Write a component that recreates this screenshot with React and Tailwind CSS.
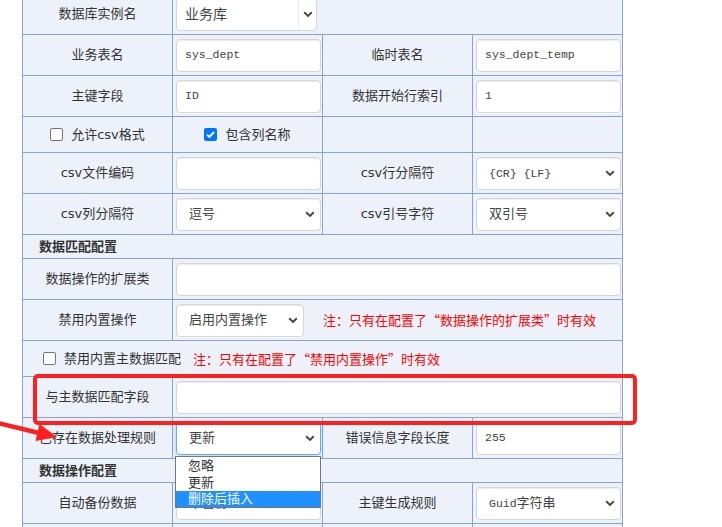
import React from "react";

const LBL = "font-['DejaVu_Sans','Noto_Sans_CJK_SC',sans-serif]";
const CJK = "font-['Noto_Sans_CJK_SC',sans-serif]";
const MONO = "font-['Liberation_Mono','Noto_Sans_CJK_SC',monospace]";

function Chevron() {
  return (
    <svg width="10" height="7" viewBox="0 0 10 7" className="shrink-0">
      <path d="M1.2 1.3 L5 5 L8.8 1.3" fill="none" stroke="#444" strokeWidth="1.9" />
    </svg>
  );
}

function Label({ children, className = "" }) {
  return (
    <div className={`bg-[#edf2fa] flex items-center justify-center text-[13px] text-[#333] ${LBL} ${className}`}>
      {children}
    </div>
  );
}

function InputBox({ children, mono = true }) {
  return (
    <div className={`h-[33px] w-full rounded-[4px] border border-[#d6d6d6] bg-white shadow-[inset_0_1px_1px_rgba(0,0,0,0.08)] flex items-center pl-[8px] text-[#444] ${mono ? `text-[11.5px] ${MONO}` : `text-[13px] ${LBL}`}`}>
      {children}
    </div>
  );
}

function SelectBox({ children, className = "w-full", focus = false, extra = null }) {
  return (
    <div className={`relative ${className}`}>
      <div
        className={`h-[33px] w-full rounded-[4px] border bg-white flex items-center pl-[12px] pr-[5px] text-[13px] text-[#444] ${LBL} ${
          focus
            ? "border-[#66afe9] shadow-[0_0_4px_rgba(102,175,233,0.6)]"
            : "border-[#d6d6d6] shadow-[inset_0_1px_1px_rgba(0,0,0,0.08)]"
        }`}
      >
        <div className="flex-1 whitespace-nowrap overflow-hidden">{children}</div>
        <Chevron />
      </div>
      {extra}
    </div>
  );
}

function InCell({ children, className = "" }) {
  return <div className={`bg-[#edf2fa] flex items-center pl-[3px] pr-[1px] h-[40px] ${className}`}>{children}</div>;
}

function CheckBox({ checked }) {
  if (checked) {
    return (
      <div className="w-[13px] h-[13px] rounded-[2px] bg-[#0075ff] flex items-center justify-center shrink-0">
        <svg width="11" height="11" viewBox="0 0 11 11">
          <path d="M2 5.6 L4.4 8 L9 3" fill="none" stroke="#fff" strokeWidth="1.9" />
        </svg>
      </div>
    );
  }
  return <div className="w-[13px] h-[13px] rounded-[2px] border border-[#767676] bg-white shrink-0" />;
}

function Section({ children }) {
  return (
    <div className={`col-span-4 bg-[#edf2fa] h-[23px] flex items-center pl-[16px] text-[13px] font-bold text-[#333] ${LBL}`}>
      {children}
    </div>
  );
}

export default function App() {
  return (
    <div className="relative w-[722px] h-[527px] overflow-hidden bg-white">
      <div className="ml-[22px] mt-[-7px] w-[601px] grid grid-cols-[149px_149px_149px_149px] gap-[1px] bg-[#84a4dc] p-[1px]">
        {/* row 0 */}
        <Label className="h-[40px]">数据库实例名</Label>
        <InCell className="col-span-3">
          <div className={`relative h-[33px] w-[141px] rounded-[4px] border border-[#d6d6d6] bg-white flex items-center text-[14px] text-[#444] ${LBL}`}>
            <div className="flex-1 pl-[8px]">业务库</div>
            <div className="w-[18px] h-full border-l border-[#ececec] flex items-center justify-center">
              <Chevron />
            </div>
          </div>
        </InCell>

        {/* row 1 */}
        <Label className="h-[40px]">业务表名</Label>
        <InCell><InputBox>sys_dept</InputBox></InCell>
        <Label>临时表名</Label>
        <InCell><InputBox>sys_dept_temp</InputBox></InCell>

        {/* row 2 */}
        <Label className="h-[40px]">主键字段</Label>
        <InCell><InputBox>ID</InputBox></InCell>
        <Label>数据开始行索引</Label>
        <InCell><InputBox>1</InputBox></InCell>

        {/* row 3 */}
        <Label className="h-[35px] gap-[8px]">
          <CheckBox checked={false} />
          <span>允许csv格式</span>
        </Label>
        <Label className="gap-[8px]">
          <CheckBox checked={true} />
          <span>包含列名称</span>
        </Label>
        <div className="bg-[#edf2fa]" />
        <div className="bg-[#edf2fa]" />

        {/* row 4 */}
        <Label className="h-[40px]">csv文件编码</Label>
        <InCell><InputBox></InputBox></InCell>
        <Label>csv行分隔符</Label>
        <InCell><SelectBox><span className={`text-[11.5px] ${MONO}`}>{"{CR} {LF}"}</span></SelectBox></InCell>

        {/* row 5 */}
        <Label className="h-[40px]">csv列分隔符</Label>
        <InCell><SelectBox>逗号</SelectBox></InCell>
        <Label>csv引号字符</Label>
        <InCell><SelectBox>双引号</SelectBox></InCell>

        {/* row 6 */}
        <Section>数据匹配配置</Section>

        {/* row 7 */}
        <Label className="h-[40px]">数据操作的扩展类</Label>
        <InCell className="col-span-3"><InputBox></InputBox></InCell>

        {/* row 8 */}
        <Label className="h-[40px]">禁用内置操作</Label>
        <InCell className="col-span-3 gap-[19px]">
          <SelectBox className="w-[128px] shrink-0">启用内置操作</SelectBox>
          <span className={`text-[13px] text-[#ff0000] ${CJK}`}>注：只有在配置了“数据操作的扩展类”时有效</span>
        </InCell>

        {/* row 9 */}
        <div className={`col-span-4 bg-[#edf2fa] h-[35px] flex items-center pl-[20px] text-[13px] text-[#333] ${LBL}`}>
          <CheckBox checked={false} />
          <span className="ml-[8px]">禁用内置主数据匹配</span>
          <span className={`ml-[12px] text-[#ff0000] ${CJK}`}>注：只有在配置了“禁用内置操作”时有效</span>
        </div>

        {/* row 10 */}
        <Label className="h-[40px]">与主数据匹配字段</Label>
        <InCell className="col-span-3"><InputBox></InputBox></InCell>

        {/* row 11 */}
        <Label className="h-[40px]">已存在数据处理规则</Label>
        <InCell className="relative z-10">
          <SelectBox
            focus
            extra={
              <div className={`absolute left-[-1px] top-[calc(100%+1px)] w-[146px] border border-[#767676] bg-white text-[13px] text-[#333] ${LBL}`}>
                <div className="h-[17px] leading-[17px] pl-[12px]">忽略</div>
                <div className="h-[17px] leading-[17px] pl-[12px]">更新</div>
                <div className="h-[16px] leading-[16px] pl-[12px] bg-[#1e90ff] text-white">删除后插入</div>
              </div>
            }
          >
            更新
          </SelectBox>
        </InCell>
        <Label>错误信息字段长度</Label>
        <InCell><InputBox>255</InputBox></InCell>

        {/* row 12 */}
        <Section>数据操作配置</Section>

        {/* row 13 */}
        <Label className="h-[40px]">自动备份数据</Label>
        <InCell><SelectBox>不备份</SelectBox></InCell>
        <Label>主键生成规则</Label>
        <InCell>
          <SelectBox>
            <span className={`text-[11.5px] ${MONO}`}>Guid</span>字符串
          </SelectBox>
        </InCell>

        {/* row 14 (cut off by the window) */}
        <Label className="h-[40px]" />
        <InCell><InputBox></InputBox></InCell>
        <Label />
        <InCell><InputBox></InputBox></InCell>
      </div>

      {/* red highlight */}
      <div className="absolute left-[33px] top-[374px] w-[604px] h-[51px] border-4 border-[#ff1f1f] rounded-[5px] pointer-events-none z-20" />

      {/* red arrow */}
      <svg className="absolute left-0 top-[410px] z-20" width="70" height="45" viewBox="0 0 70 45">
        <line x1="-2" y1="13" x2="40" y2="23.2" stroke="#ff1f1f" strokeWidth="4.5" />
        <polygon points="57,27 39.5,14 35.5,31" fill="#ff1f1f" />
      </svg>
    </div>
  );
}
